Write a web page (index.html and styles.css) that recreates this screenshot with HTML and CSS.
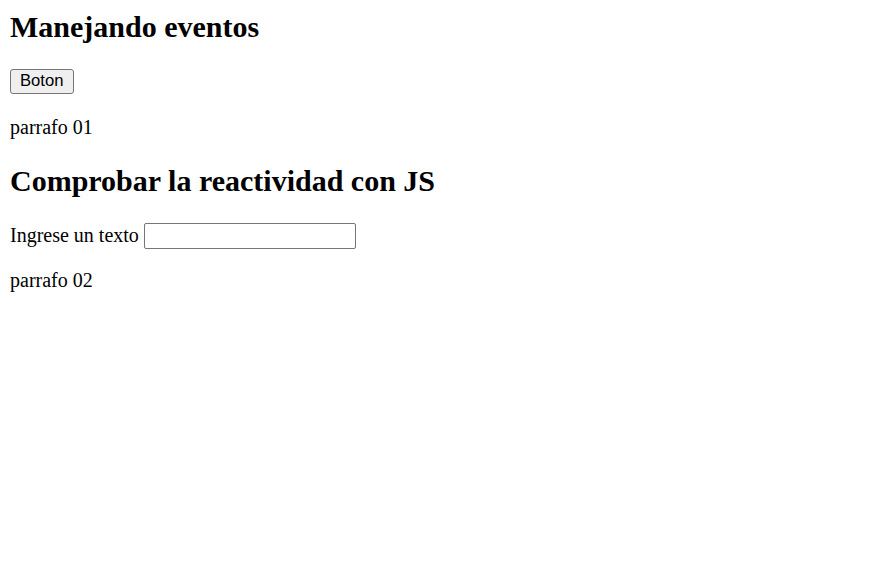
FILE: index.html
```html
<!DOCTYPE html>
<html lang="es">
<head>
<meta charset="utf-8">
<title>Manejando eventos</title>
<link rel="stylesheet" href="styles.css">
</head>
<body>
<h1 class="title first">Manejando eventos</h1>
<div class="btn-row"><button class="btn" type="button">Boton</button></div>
<p class="text">parrafo 01</p>
<h2 class="title">Comprobar la reactividad con JS</h2>
<label class="text row">Ingrese un texto <input class="field" type="text"></label>
<p class="text">parrafo 02</p>
</body>
</html>
```
FILE: styles.css
```css
body {
  margin: 10px;
  font-family: "Liberation Serif", "Times New Roman", serif;
  font-size: 20px;
  color: #000;
  background: #fff;
}
.title {
  font-size: 30px;
  font-weight: bold;
  margin: 24.9px 0;
}
.title.first {
  margin-top: 0;
}
.btn-row {
  height: 27px;
}
.btn {
  font-family: "Liberation Sans", Arial, sans-serif;
  font-size: 16.67px;
  height: 25px;
  padding: 0 9px;
  margin: 0;
  border: 1px solid #767676;
  border-radius: 3px;
  background: #efefef;
  color: #000;
  vertical-align: top;
}
.text {
  margin: 20px 0;
}
.row {
  display: flex;
  align-items: center;
  gap: 5px;
  height: 26px;
}
.field {
  font-family: "Liberation Sans", Arial, sans-serif;
  font-size: 16.67px;
  width: 212px;
  height: 26px;
  padding: 1px 2px;
  border: 1px solid #767676;
  border-radius: 2px;
  box-sizing: border-box;
}
```
